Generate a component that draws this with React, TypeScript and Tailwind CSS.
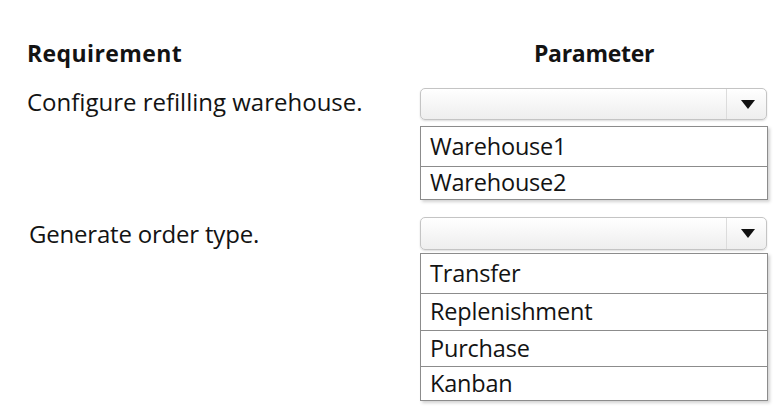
import React from "react";

interface Option {
  label: string;
  h: string;
}

const warehouses: Option[] = [
  { label: "Warehouse1", h: "h-[39px]" },
  { label: "Warehouse2", h: "h-[33px]" },
];

const orderTypes: Option[] = [
  { label: "Transfer", h: "h-[39px]" },
  { label: "Replenishment", h: "h-[37px]" },
  { label: "Purchase", h: "h-[36px]" },
  { label: "Kanban", h: "h-[34px]" },
];

const Select = ({ h }: { h: string }) => (
  <div
    className={`flex ${h} w-[347px] rounded-[5px] border border-[#c4c4c4] bg-gradient-to-b from-white to-[#eeeeee] shadow-[0_1px_2px_rgba(0,0,0,0.14)]`}
  >
    <div className="flex-1" />
    <div className="flex w-[40px] items-center justify-center border-l border-[#dcdcdc] pl-[2px]">
      <svg width="14" height="9" viewBox="0 0 14 9">
        <path d="M0 0 H14 L7 9 Z" fill="#111" />
      </svg>
    </div>
  </div>
);

const OptionList = ({ options }: { options: Option[] }) => (
  <div className="w-[348px] border border-[#8c8c8c] bg-white shadow-[2px_2px_3px_rgba(0,0,0,0.18)]">
    {options.map((o, i) => (
      <div
        key={o.label}
        className={`flex ${o.h} items-center pl-[9px] text-[23.5px] leading-none tracking-[-0.2px] ${
          i > 0 ? "border-t border-[#8c8c8c]" : ""
        }`}
      >
        {o.label}
      </div>
    ))}
  </div>
);

export default function App() {
  return (
    <div className="h-[413px] w-[784px] overflow-hidden bg-white pl-[27px] pt-[38px] font-['Open_Sans',sans-serif] text-[#131313]">
      <div className="flex h-[30px] items-center text-[23px] font-bold leading-none">
        <div className="w-[393px] tracking-[0.4px]">Requirement</div>
        <div className="w-[348px] text-center tracking-[-0.3px]">Parameter</div>
      </div>

      <div className="mt-[20px] flex">
        <div className="flex h-[32px] w-[393px] items-center pb-[5px] text-[24px] leading-none tracking-[0px]">
          Configure refilling warehouse.
        </div>
        <div className="flex flex-col">
          <Select h="h-[32px]" />
          <div className="mt-[6px]">
            <OptionList options={warehouses} />
          </div>
        </div>
      </div>

      <div className="mt-[17px] flex">
        <div className="flex h-[33px] w-[393px] items-center pl-[2px] text-[24px] leading-none tracking-[-0.2px]">
          Generate order type.
        </div>
        <div className="flex flex-col">
          <Select h="h-[33px]" />
          <div className="mt-[3px]">
            <OptionList options={orderTypes} />
          </div>
        </div>
      </div>
    </div>
  );
}
